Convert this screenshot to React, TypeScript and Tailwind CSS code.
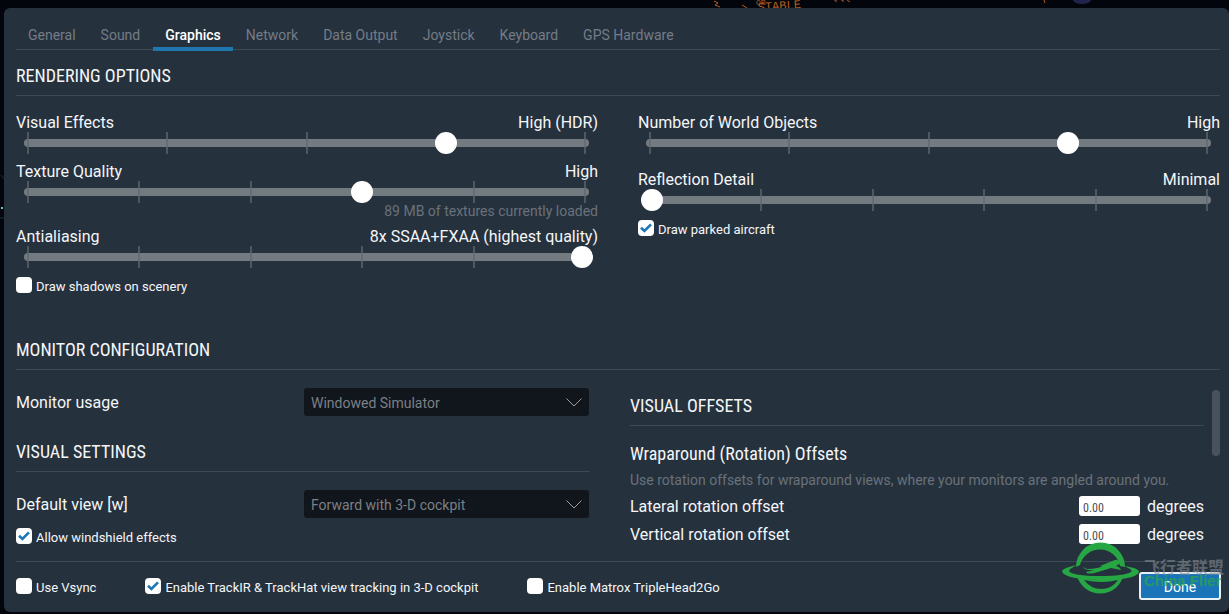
import { useId, useState, type ReactNode } from "react";

const TABS = ["General", "Sound", "Graphics", "Network", "Data Output", "Joystick", "Keyboard", "GPS Hardware"];

function Heading({ children }: { children: ReactNode }) {
  return (
    <h2 className="border-b border-[#3d4956] pt-3.5 pb-[7px] font-['Roboto_Condensed','Roboto',sans-serif] text-lg leading-6 whitespace-nowrap">
      {children}
    </h2>
  );
}

type SliderProps = { label: string; text: string; ticks: number; initial: number };

function Slider({ label, text, ticks, initial }: SliderProps) {
  const id = useId();
  const [value, setValue] = useState(initial);
  return (
    <div>
      <div className="flex h-5 justify-between pt-px leading-5">
        <label htmlFor={id}>{label}</label>
        <output htmlFor={id}>{text}</output>
      </div>
      <div className="grid h-[22px] items-center *:col-start-1 *:row-start-1">
        <div className="mr-[9px] ml-2 h-2 rounded-full bg-[#737a80]" />
        <div className="mr-3 ml-[11px] flex h-full justify-between">
          {Array.from({ length: ticks }, (_, i) => (
            <span key={i} className="h-full w-0.5 bg-[#5f6974]/70" />
          ))}
        </div>
        <input
          id={id}
          type="range"
          min={0}
          max={100}
          step={0.1}
          value={value}
          onChange={(e) => setValue(Number(e.target.value))}
          className="relative mr-[5px] ml-[3px] h-[22px] appearance-none bg-transparent [&::-webkit-slider-thumb]:size-[22px] [&::-webkit-slider-thumb]:appearance-none [&::-webkit-slider-thumb]:rounded-full [&::-webkit-slider-thumb]:bg-white"
        />
      </div>
    </div>
  );
}

function Check({ label, checked = false }: { label: string; checked?: boolean }) {
  return (
    <label className="flex h-4 items-center gap-1 text-[13px] leading-4 whitespace-nowrap">
      <span className="grid size-4 shrink-0 *:col-start-1 *:row-start-1">
        <input type="checkbox" defaultChecked={checked} className="peer size-4 appearance-none rounded bg-white" />
        <svg viewBox="0 0 16 16" className="pointer-events-none invisible size-4 peer-checked:visible" aria-hidden="true">
          <path d="M3 7.8 6.4 11 13 4.4" fill="none" stroke="#1b77b5" strokeWidth="2.6" />
        </svg>
      </span>
      <span className="pt-1">{label}</span>
    </label>
  );
}

function SelectRow({ label, option }: { label: string; option: string }) {
  const id = useId();
  return (
    <div className="mt-[18px] grid grid-cols-2 items-center">
      <label htmlFor={id} className="pt-0.5">{label}</label>
      <div className="mx-px grid items-center *:col-start-1 *:row-start-1">
        <select id={id} className="h-7 w-full appearance-none rounded-[3px] bg-[#11151c] px-[7px] pt-0.5 text-sm text-[#7b8087]">
          <option>{option}</option>
        </select>
        <svg viewBox="0 0 16 9" className="pointer-events-none mr-[7px] h-[9px] w-4 justify-self-end" aria-hidden="true">
          <path d="M0.5 0.5 8 8 15.5 0.5" fill="none" stroke="#9a9ea3" />
        </svg>
      </div>
    </div>
  );
}

function OffsetRow({ label }: { label: string }) {
  const id = useId();
  return (
    <div className="flex h-5 items-center">
      <label htmlFor={id} className="flex-1 pt-0.5">{label}</label>
      <input id={id} type="text" defaultValue="0.00" className="h-5 w-[61px] rounded-[3px] bg-white px-1 pt-1 font-['Roboto_Condensed','Roboto',sans-serif] text-xs text-[#4b4f54]" />
      <span className="pt-0.5 pl-[7px]">degrees</span>
    </div>
  );
}

function Watermark() {
  return (
    <div className="pointer-events-none absolute right-[5px] bottom-[18px] flex items-center gap-1 whitespace-nowrap" aria-hidden="true">
      <svg viewBox="0 0 80 52" className="h-[52px] w-20" fill="none">
        <path d="M16 25A24.500 24.500 0 0 1 65 25L60 24A20.500 20.500 0 0 0 20 23Z" fill="#27a744" />
        <path d="M17 35Q38 41 63 35Q57 51 40 51.500Q24 51 17 35ZM24 38Q31 47 41 47Q52 47 58 38Q42 42 24 38Z" fill="#27a744" fillRule="evenodd" />
        <path d="M17 23Q3 26 2 29Q3 37 39 38Q76 38 79 30Q79 26 64 24Q74 28 71 30Q64 34 40 34Q12 34 9 29Q9 27 17 23Z" fill="#27a744" />
        <path d="M23 25 27 27Q39 27 48 22L58 18Q63 18 62 20L56 24Q60 25 61 28L51 26 38 30Q27 33 26 30L35 28Q26 29 23 25ZM40 24 55 18Q59 17 55 20L45 25Z" fill="#27a744" />
      </svg>
      <div className="pt-2">
        <div className="font-['Noto_Sans_CJK_SC',sans-serif] text-[16px] leading-4 font-bold text-[#858b91]/60">飞行者联盟</div>
        <div className="font-['Liberation_Sans',sans-serif] text-[15px] leading-[13px] font-bold text-[#27a744]/75">China Flier</div>
      </div>
    </div>
  );
}

function Backdrop() {
  return (
    <div className="absolute inset-0 overflow-hidden" aria-hidden="true">
      <svg className="absolute top-0 right-0 h-2 w-[529px]" viewBox="0 0 529 8" fill="#b35c22">
        <path d="M14 1l4 2-3 2 5 2M42 5l5 3M134 0h2v2M141 0h2v2M147 0l3 2M344 0l1 3" stroke="#b35c22" fill="none" />
        <text x="58" y="11" fontSize="12" fontFamily="Liberation Mono" transform="rotate(-4 58 11)">STABLE</text>
        <text x="56" y="5" fontSize="8" fontFamily="Liberation Mono">OR</text>
        <ellipse cx="382" cy="0" rx="9" ry="4" fill="#20234b" />
      </svg>
      <svg className="absolute top-[170px] left-0 h-16 w-1" viewBox="0 0 4 64">
        <path d="M1 5l3 4M0 48h4" stroke="#123440" />
        <path d="M1 38h2" stroke="#6fc0dc" strokeWidth="2" />
      </svg>
    </div>
  );
}

export default function App() {
  const [tab, setTab] = useState("Graphics");
  return (
    <div className="relative min-h-screen bg-[#02050b] pt-2 pb-0.5 pl-1 font-['Roboto',sans-serif] text-base leading-5 text-[#f4f6f8]">
      <Backdrop />
      <main className="relative rounded-md bg-[#26313e] pr-2 pb-3 pl-3">
        <nav className="mr-px flex gap-px border-b border-[#3d4956]">
          {TABS.map((name) => (
            <button
              key={name}
              type="button"
              onClick={() => setTab(name)}
              className={
                name === tab
                  ? "-mb-0.5 border-b-4 border-[#1f77ae] px-3 pt-[17px] pb-0.5 text-sm leading-5 font-medium text-white"
                  : "-mb-0.5 border-b-4 border-transparent px-3 pt-[17px] pb-0.5 text-sm leading-5 text-[#747c86]"
              }
            >
              {name}
            </button>
          ))}
        </nav>

        <section className="mr-px">
          <Heading>RENDERING OPTIONS</Heading>
          <div className="mt-4 grid grid-cols-2 gap-10">
            <div>
              <Slider label="Visual Effects" text="High (HDR)" ticks={5} initial={75.4} />
              <div className="mt-[7px]">
                <Slider label="Texture Quality" text="High" ticks={6} initial={60.1} />
              </div>
              <p className="text-right text-sm leading-4 text-[#69717a]">89 MB of textures currently loaded</p>
              <div className="mt-[7px] mb-[9px]">
                <Slider label="Antialiasing" text="8x SSAA+FXAA (highest quality)" ticks={6} initial={100} />
              </div>
              <Check label="Draw shadows on scenery" />
            </div>
            <div>
              <Slider label="Number of World Objects" text="High" ticks={5} initial={75.4} />
              <div className="mt-[15px] mb-[9px]">
                <Slider label="Reflection Detail" text="Minimal" ticks={6} initial={0} />
              </div>
              <Check label="Draw parked aircraft" checked />
            </div>
          </div>
        </section>

        <section className="mt-[31px] mr-px">
          <Heading>MONITOR CONFIGURATION</Heading>
          <div className="flex">
            <div className="grid flex-1 grid-cols-2 gap-10">
              <div>
                <SelectRow label="Monitor usage" option="Windowed Simulator" />
                <div className="mt-2.5">
                  <Heading>VISUAL SETTINGS</Heading>
                </div>
                <SelectRow label="Default view [w]" option="Forward with 3-D cockpit" />
                <div className="mt-2.5">
                  <Check label="Allow windshield effects" checked />
                </div>
              </div>
              <div className="mt-2.5">
                <Heading>VISUAL OFFSETS</Heading>
                <h3 className="mt-4 font-['Roboto_Condensed','Roboto',sans-serif] text-lg leading-6">Wraparound (Rotation) Offsets</h3>
                <p className="mt-1 mb-1.5 text-sm leading-5 whitespace-nowrap text-[#69717a]">
                  Use rotation offsets for wraparound views, where your monitors are angled around you.
                </p>
                <div className="flex flex-col gap-2">
                  <OffsetRow label="Lateral rotation offset" />
                  <OffsetRow label="Vertical rotation offset" />
                </div>
              </div>
            </div>
            <div className="mt-5 ml-2 h-[66px] w-2 rounded-full bg-[#48515c]" />
          </div>
        </section>

        <footer className="mt-[17px] flex items-center border-t border-[#3d4956] pt-2.5">
          <div className="flex flex-1 items-center gap-[49px]">
            <Check label="Use Vsync" />
            <Check label="Enable TrackIR & TrackHat view tracking in 3-D cockpit" checked />
            <Check label="Enable Matrox TripleHead2Go" />
          </div>
          <button type="button" className="h-7 w-[82px] rounded-[3px] border-2 border-[#e8f1f8] bg-[#1c74b8] pt-0.5 text-sm text-white">
            Done
          </button>
        </footer>
        <Watermark />
      </main>
    </div>
  );
}
